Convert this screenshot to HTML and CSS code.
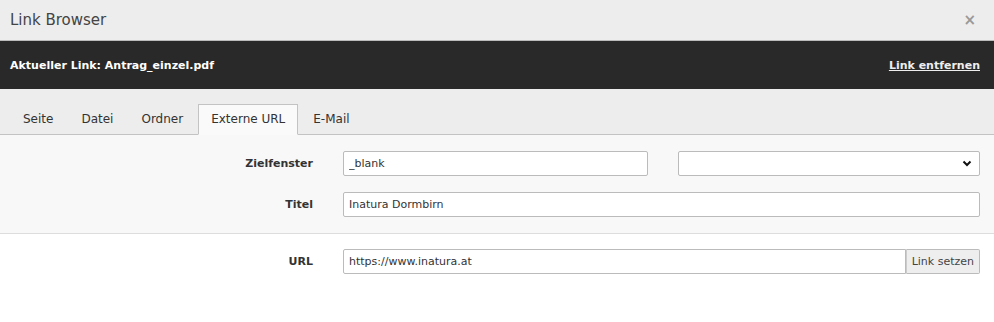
FILE: index.html
```html
<!DOCTYPE html>
<html>
<head>
    <meta charset="UTF-8">
    <title>Link Browser</title>
    <link rel="stylesheet" href="styles.css">
</head>
<body>

	<div class="modal_header">
	    <h4 class="modal_title">Link Browser</h4>
	    <span class="modal_close">&times;</span>
	</div>

	<div class="current_link">
	    <span>Aktueller Link: Antrag_einzel.pdf</span>
	    <a href="#">Link entfernen</a>
	</div>

	<ul class="tabs">
	    <li><a href="#">Seite</a></li>
	    <li><a href="#">Datei</a></li>
	    <li><a href="#">Ordner</a></li>
	    <li class="active"><a href="#">Externe URL</a></li>
	    <li><a href="#">E-Mail</a></li>
	</ul>

	<div class="attrs">
	    <div class="row">
	        <label>Zielfenster</label>
	        <div class="field two_cols">
	            <input type="text" value="_blank">
	            <div class="select_box">
	                <svg width="10" height="7" viewBox="0 0 10 7"><path d="M1.5 1.5 L5 5 L8.5 1.5" fill="none" stroke="#111" stroke-width="2"/></svg>
	            </div>
	        </div>
	    </div>
	    <div class="row">
	        <label>Titel</label>
	        <div class="field">
	            <input type="text" value="Inatura Dormbirn">
	        </div>
	    </div>
	</div>

	<div class="url_part">
	    <div class="row">
	        <label>URL</label>
	        <div class="field group">
	            <input type="text" value="https://www.inatura.at">
	            <button>Link setzen</button>
	        </div>
	    </div>
	</div>

</body>
</html>
```

FILE: styles.css
```css
*{
    margin: 0;
    padding: 0;
    box-sizing: border-box;
}
body{
    font-family: "DejaVu Sans", Verdana, sans-serif;
    font-size: 12px;
    color: #333;
    background: #fff;
}
.modal_header{
    display: flex;
    align-items: center;
    justify-content: space-between;
    height: 41px;
    padding: 0 18px 0 10px;
    background: #ededed;
    border-bottom: 1px solid #bbb;
}
.modal_title{
    font-size: 15px;
    font-weight: normal;
    color: #444;
}
.modal_close{
    font-size: 15px;
    font-weight: bold;
    color: #999;
}
.current_link{
    display: flex;
    align-items: center;
    justify-content: space-between;
    height: 48px;
    padding: 0 14px 0 10px;
    background: #292929;
    color: #fff;
    font-size: 11px;
    font-weight: bold;
}
.current_link a{
    color: #eee;
    font-weight: bold;
}
.tabs{
    display: flex;
    padding: 15px 10px 0;
    background: #ededed;
    border-bottom: 1px solid #c3c3c3;
    list-style-type: none;
}
.tabs li{
    margin-right: 2px;
    margin-bottom: -1px;
    border: 1px solid transparent;
}
.tabs a{
    display: block;
    padding: 0 12px;
    line-height: 29px;
    color: #333;
    text-decoration: none;
}
.tabs .active{
    background: #fafafa;
    border-color: #c3c3c3;
    border-bottom-color: #fafafa;
}
.attrs{
    padding: 16px 14px 16px 0;
    background: #f8f8f8;
    border-bottom: 1px solid #ddd;
    display: flex;
    flex-direction: column;
    gap: 16px;
}
.url_part{
    padding: 15px 14px 0 0;
}
.row{
    display: flex;
    align-items: center;
    gap: 30px;
    font-size: 11px;
}
.row label{
    width: 313px;
    text-align: right;
    font-weight: bold;
}
.field{
    flex: 1;
    display: flex;
}
.two_cols{
    gap: 30px;
}
.two_cols > *{
    flex: 1;
}
input{
    width: 100%;
    height: 25px;
    padding: 0 5px;
    border: 1px solid #bbb;
    border-radius: 2px;
    background: #fff;
    font: inherit;
    color: #333;
}
.select_box{
    height: 25px;
    border: 1px solid #bbb;
    border-radius: 2px;
    background: #fff;
    display: flex;
    align-items: center;
    justify-content: flex-end;
    padding-right: 7px;
}
.group input{
    border-radius: 2px 0 0 2px;
}
.group button{
    flex: none;
    height: 25px;
    padding: 0 5px;
    border: 1px solid #bbb;
    border-left-color: #ccc;
    border-radius: 0 2px 2px 0;
    background: #eee;
    font: inherit;
    color: #444;
}
```
